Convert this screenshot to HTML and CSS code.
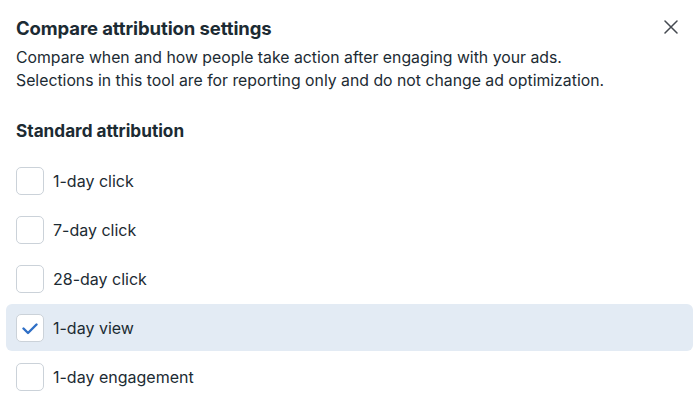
FILE: index.html
```html
<!DOCTYPE html>
<html lang="en">
<head>
<meta charset="utf-8">
<title>Compare attribution settings</title>
<link rel="stylesheet" href="styles.css">
</head>
<body>
<div class="dialog">
  <header class="dialog-header">
    <h1 class="dialog-title">Compare attribution settings</h1>
    <button class="close-btn" type="button" aria-label="Close">
      <svg width="14" height="14" viewBox="0 0 14 14" aria-hidden="true">
        <path d="M1 1 L13 13 M13 1 L1 13" stroke="#444950" stroke-width="1.5" stroke-linecap="round" fill="none"/>
      </svg>
    </button>
  </header>
  <p class="dialog-desc">Compare when and how people take action after engaging with your ads.<br>Selections in this tool are for reporting only and do not change ad optimization.</p>

  <h2 class="section-title">Standard attribution</h2>

  <ul class="option-list">
    <li class="option">
      <span class="checkbox"></span>
      <span class="option-label">1-day click</span>
    </li>
    <li class="option">
      <span class="checkbox"></span>
      <span class="option-label">7-day click</span>
    </li>
    <li class="option">
      <span class="checkbox"></span>
      <span class="option-label">28-day click</span>
    </li>
    <li class="option is-checked">
      <span class="checkbox">
        <svg width="16" height="16" viewBox="0 0 16 16" aria-hidden="true">
          <path d="M1.5 8.5 L6 13 L14.5 4.5" stroke="#2f6fc6" stroke-width="2.4" stroke-linecap="round" stroke-linejoin="round" fill="none"/>
        </svg>
      </span>
      <span class="option-label">1-day view</span>
    </li>
    <li class="option">
      <span class="checkbox"></span>
      <span class="option-label">1-day engagement</span>
    </li>
  </ul>
</div>
</body>
</html>
```

FILE: styles.css
```css
* {
  box-sizing: border-box;
}

html, body {
  margin: 0;
  background: #ffffff;
}

body {
  font-family: Inter, "Noto Sans", Roboto, sans-serif;
  color: #1c2b33;
}

.dialog {
  padding: 15px 7px 0 6px;
}

.dialog-header {
  display: flex;
  align-items: center;
  justify-content: space-between;
  padding-left: 10px;
}

.dialog-title {
  margin: 0;
  font-size: 18.5px;
  font-weight: 700;
  line-height: 26px;
  letter-spacing: -0.1px;
}

.close-btn {
  border: 0;
  background: none;
  padding: 0;
  margin-right: 15px;
  margin-top: -2px;
  width: 14px;
  height: 14px;
  display: flex;
  cursor: pointer;
}

.dialog-desc {
  margin: 5px 0 0;
  padding-left: 10px;
  font-size: 15.8px;
  line-height: 23px;
  color: #1c2b33;
}

.section-title {
  margin: 27px 0 0;
  padding-left: 10px;
  font-size: 17.2px;
  font-weight: 700;
  line-height: 24px;
}

.option-list {
  list-style: none;
  margin: 14px 0 0;
  padding: 0;
  display: flex;
  flex-direction: column;
  gap: 2px;
}

.option {
  display: flex;
  align-items: center;
  gap: 9px;
  height: 47px;
  padding-left: 10px;
  border-radius: 6px;
}

.option.is-checked {
  background: #e3ebf4;
}

.checkbox {
  width: 28px;
  height: 28px;
  flex: none;
  border: 1px solid #cbd2d9;
  border-radius: 5px;
  background: #ffffff;
  display: flex;
  align-items: center;
  justify-content: center;
}

.option-label {
  font-size: 16px;
  line-height: 20px;
}
```
